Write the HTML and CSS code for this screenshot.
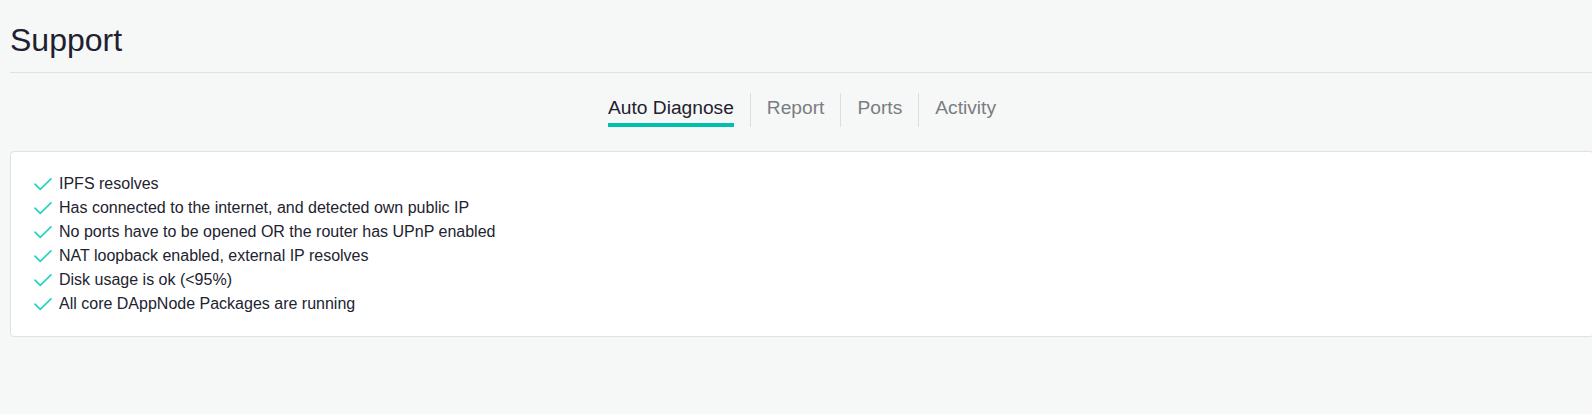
FILE: index.html
```html
<!DOCTYPE html>
<html lang="en">
<head>
<meta charset="utf-8">
<title>Support</title>
<link rel="stylesheet" href="styles.css">
</head>
<body>
<div class="page">
  <header class="header">
    <h1 class="title">Support</h1>
  </header>
  <nav class="tabs">
    <div class="tab active"><span class="tab-label">Auto Diagnose</span></div>
    <div class="tab"><span class="tab-label">Report</span></div>
    <div class="tab"><span class="tab-label">Ports</span></div>
    <div class="tab"><span class="tab-label">Activity</span></div>
  </nav>
  <section class="card">
    <ul class="checks">
      <li class="check"><svg class="check-icon" viewBox="0 0 18 13"><polyline points="1,6.2 6.2,11.4 17,0.8"/></svg><span>IPFS resolves</span></li>
      <li class="check"><svg class="check-icon" viewBox="0 0 18 13"><polyline points="1,6.2 6.2,11.4 17,0.8"/></svg><span>Has connected to the internet, and detected own public IP</span></li>
      <li class="check"><svg class="check-icon" viewBox="0 0 18 13"><polyline points="1,6.2 6.2,11.4 17,0.8"/></svg><span>No ports have to be opened OR the router has UPnP enabled</span></li>
      <li class="check"><svg class="check-icon" viewBox="0 0 18 13"><polyline points="1,6.2 6.2,11.4 17,0.8"/></svg><span>NAT loopback enabled, external IP resolves</span></li>
      <li class="check"><svg class="check-icon" viewBox="0 0 18 13"><polyline points="1,6.2 6.2,11.4 17,0.8"/></svg><span>Disk usage is ok (&lt;95%)</span></li>
      <li class="check"><svg class="check-icon" viewBox="0 0 18 13"><polyline points="1,6.2 6.2,11.4 17,0.8"/></svg><span>All core DAppNode Packages are running</span></li>
    </ul>
  </section>
</div>
</body>
</html>
```
FILE: styles.css
```css
html, body {
  margin: 0;
  padding: 0;
  background: #f6f8f7;
  overflow: hidden;
}
body {
  font-family: "Liberation Sans", Arial, sans-serif;
  color: #22232f;
}
.page {
  margin-left: 10px;
  width: 1584px;
}
.header {
  padding: 21px 0 13px;
  border-bottom: 1px solid #e0e3e2;
}
.title {
  margin: 0;
  font-size: 32px;
  line-height: 38px;
  font-weight: 400;
  color: #1f2130;
}
.tabs {
  display: flex;
  justify-content: center;
  margin-top: 20px;
}
.tab {
  padding: 4px 16px 0;
  font-size: 19.2px;
  line-height: 22px;
  color: #7b7c82;
}
.tab + .tab {
  border-left: 1px solid #dcdfdf;
}
.tab.active {
  color: #1f2130;
}
.tab-label {
  display: block;
  padding-bottom: 4px;
  border-bottom: 4px solid transparent;
}
.tab.active .tab-label {
  border-bottom-color: #00bfae;
}
.card {
  margin-top: 24px;
  background: #ffffff;
  border: 1px solid #dfe2e1;
  border-radius: 4px;
  padding: 20px;
}
.checks {
  list-style: none;
  margin: 0;
  padding: 0;
}
.check {
  display: flex;
  align-items: center;
  font-size: 16px;
  line-height: 24px;
  color: #22232f;
}
.check-icon {
  width: 18px;
  height: 13px;
  margin-left: 3px;
  margin-right: 7px;
  flex: none;
  fill: none;
  stroke: #2ad2bf;
  stroke-width: 1.7;
  stroke-linecap: round;
  stroke-linejoin: round;
}
```
